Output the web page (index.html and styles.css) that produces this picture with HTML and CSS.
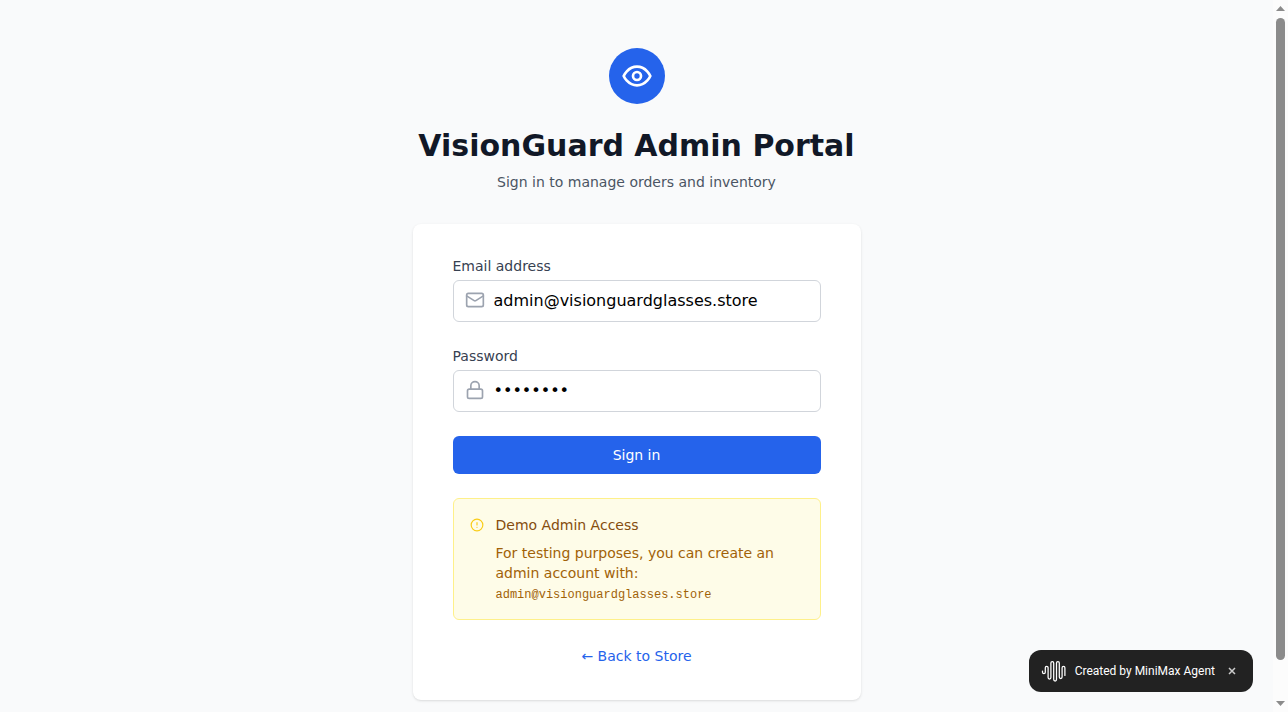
FILE: index.html
```html
<!DOCTYPE html>
<html lang="en">
<head>
<meta charset="utf-8">
<meta name="viewport" content="width=device-width, initial-scale=1">
<title>VisionGuard Admin Portal</title>
<link rel="stylesheet" href="styles.css">
</head>
<body>
<div class="shell">
<main class="page">
  <header class="intro">
    <div class="brand">
      <svg class="icon brand-icon" viewBox="0 0 24 24" aria-hidden="true"><path d="M2 12s3-7 10-7 10 7 10 7-3 7-10 7-10-7-10-7Z"/><circle cx="12" cy="12" r="3"/></svg>
    </div>
    <h1 class="title">VisionGuard Admin Portal</h1>
    <p class="subtitle">Sign in to manage orders and inventory</p>
  </header>
  <section class="card">
    <form class="form">
      <div class="field">
        <label class="label" for="email">Email address</label>
        <div class="control">
          <svg class="icon control-icon" viewBox="0 0 24 24" aria-hidden="true"><rect width="20" height="16" x="2" y="4" rx="2"/><path d="m22 7-8.97 5.7a1.94 1.94 0 0 1-2.06 0L2 7"/></svg>
          <input class="input" id="email" type="email" value="admin@visionguardglasses.store">
        </div>
      </div>
      <div class="field">
        <label class="label" for="password">Password</label>
        <div class="control">
          <svg class="icon control-icon" viewBox="0 0 24 24" aria-hidden="true"><rect width="18" height="11" x="3" y="11" rx="2"/><path d="M7 11V7a5 5 0 0 1 10 0v4"/></svg>
          <input class="input" id="password" type="password" value="password">
        </div>
      </div>
      <button class="submit" type="submit">Sign in</button>
    </form>
    <aside class="notice">
      <svg class="icon notice-icon" viewBox="0 0 24 24" aria-hidden="true"><circle cx="12" cy="12" r="10"/><path d="M12 8v4M12 16h.01"/></svg>
      <div class="notice-body">
        <h2 class="notice-title">Demo Admin Access</h2>
        <p class="notice-text">For testing purposes, you can create an admin account with:<br><code class="notice-code">admin@visionguardglasses.store</code></p>
      </div>
    </aside>
    <div class="back"><a class="back-link" href="#">← Back to Store</a></div>
  </section>
</main>
<div class="scrollbar" aria-hidden="true">
  <svg class="scroll-arrow" viewBox="0 0 9 5"><path d="M4.500 0 9 5H0z"/></svg>
  <div class="scroll-track"><div class="scroll-thumb"></div></div>
  <svg class="scroll-arrow" viewBox="0 0 9 5"><path d="M0 0h9L4.500 5z"/></svg>
</div>
</div>
<div class="badge">
  <svg class="badge-logo" viewBox="0 0 26 22" aria-hidden="true"><path d="M1.500 11v1.300a1.400 1.400 0 0 0 2.800 0V7.800a1.400 1.400 0 0 1 2.800 0v9.800a1.400 1.400 0 0 0 2.800 0V2.900a1.400 1.400 0 0 1 2.800 0v16.700a1.400 1.400 0 0 0 2.800 0V2.900a1.400 1.400 0 0 1 2.800 0v14.200a1.400 1.400 0 0 0 2.800 0V7.800a1.400 1.400 0 0 1 2.800 0v7.600"/></svg>
  <span>Created by MiniMax Agent</span>
  <button class="badge-close" type="button" aria-label="Close"><svg class="badge-x" viewBox="0 0 8 8" aria-hidden="true"><path d="M1 1l6 6M7 1l-6 6"/></svg></button>
</div>
</body>
</html>
```
FILE: styles.css
```css
*, *::before, *::after { box-sizing: border-box; }
body, h1, h2, p { margin: 0; }
body {
  background: #f9fafb;
  color: #111827;
  font-family: "DejaVu Sans", sans-serif;
  font-size: 16px;
  line-height: 24px;
}
button, input { font: inherit; }
.shell { display: flex; height: 100vh; }
.page {
  flex: 1;
  min-width: 0;
  overflow-y: auto;
  scrollbar-width: none;
  padding: 48px 32px;
  display: flex;
  flex-direction: column;
  align-items: center;
  gap: 32px;
}
.scrollbar {
  flex: none;
  width: 15px;
  padding: 6px 0;
  display: flex;
  flex-direction: column;
  align-items: center;
  gap: 7px;
  background: #fcfcfc;
}
.scroll-arrow { flex: none; width: 9px; height: 5px; fill: #8b8b8b; }
.scroll-track { flex: 1; min-height: 0; }
.scroll-thumb {
  width: 9px;
  height: 95%;
  border-radius: 5px;
  background: #8b8b8b;
}
.icon {
  fill: none;
  stroke: currentColor;
  stroke-width: 2;
  stroke-linecap: round;
  stroke-linejoin: round;
}
.intro { flex: none; width: 100%; text-align: center; }
.brand {
  width: 56px;
  height: 56px;
  margin: 0 auto;
  display: flex;
  align-items: center;
  justify-content: center;
  border-radius: 50%;
  background: #2563eb;
  color: #fff;
}
.brand-icon { width: 32px; height: 32px; }
.title {
  margin-top: 24px;
  font-size: 30px;
  line-height: 36px;
  font-weight: 700;
}
.subtitle {
  margin-top: 8px;
  font-size: 14px;
  line-height: 20px;
  color: #4b5563;
}
.card {
  flex: none;
  width: 100%;
  max-width: 448px;
  padding: 32px 40px;
  background: #fff;
  border-radius: 8px;
  box-shadow: 0 1px 3px rgba(0, 0, 0, .1), 0 1px 2px -1px rgba(0, 0, 0, .1);
}
.form { display: flex; flex-direction: column; gap: 24px; }
.field { display: flex; flex-direction: column; gap: 4px; }
.label { font-size: 14px; line-height: 20px; color: #374151; }
.control { position: relative; }
.control-icon {
  position: absolute;
  left: 12px;
  top: 10px;
  width: 20px;
  height: 20px;
  color: #9ca3af;
}
.input {
  display: block;
  width: 100%;
  padding: 8px 12px 8px 40px;
  border: 1px solid #d1d5db;
  border-radius: 6px;
  background: #fff;
  color: #000;
  line-height: 24px;
}
.submit {
  padding: 8px 16px;
  border: 1px solid transparent;
  border-radius: 6px;
  background: #2563eb;
  color: #fff;
  font-size: 14px;
  line-height: 20px;
}
.notice {
  margin-top: 24px;
  padding: 16px;
  display: flex;
  gap: 12px;
  border: 1px solid #fef08a;
  border-radius: 6px;
  background: #fefce8;
  font-size: 14px;
  line-height: 20px;
}
.notice-icon { flex: none; width: 14px; height: 20px; color: #facc15; }
.notice-title { font-size: 14px; font-weight: 400; color: #854d0e; }
.notice-text { margin-top: 8px; color: #a16207; }
.notice-code {
  font-family: "Liberation Mono", monospace;
  font-size: 12px;
  line-height: 16px;
}
.back { margin-top: 24px; text-align: center; font-size: 14px; }
.back-link { color: #2563eb; text-decoration: none; }
.badge {
  position: fixed;
  right: 35px;
  bottom: 20px;
  height: 42px;
  padding: 0 16px 0 12px;
  display: flex;
  align-items: center;
  gap: 8px;
  border-radius: 12px;
  background: #222;
  color: #fff;
  font-family: Roboto, sans-serif;
  font-size: 12px;
}
.badge-logo {
  width: 26px;
  height: 22px;
  fill: none;
  stroke: #fff;
  stroke-width: 1.25;
  stroke-linecap: round;
}
.badge-close {
  margin-left: 4px;
  padding: 0;
  width: 10px;
  height: 16px;
  display: flex;
  align-items: center;
  justify-content: center;
  border: 0;
  background: none;
  color: #ccc;
}
.badge-x { width: 8px; height: 8px; stroke: currentColor; stroke-width: 1.5; }
```
